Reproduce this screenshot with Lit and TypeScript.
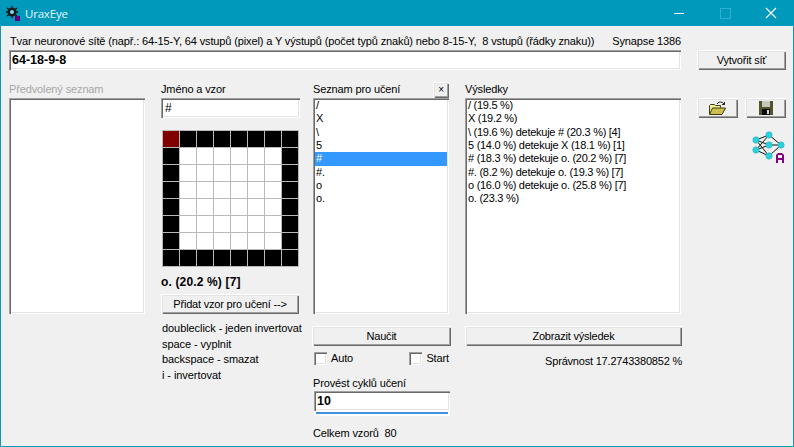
import { LitElement, html, css, svg } from "lit";
import { customElement } from "lit/decorators.js";

const learn = ["/", "X", "\\", "5", "#", "#.", "o", "o."];
const results = [
  "/ (19.5 %)",
  "X (19.2 %)",
  "\\ (19.6 %) detekuje # (20.3 %) [4]",
  "5 (14.0 %) detekuje X (18.1 %) [1]",
  "# (18.3 %) detekuje o. (20.2 %) [7]",
  "#. (8.2 %) detekuje o. (19.3 %) [7]",
  "o (16.0 %) detekuje o. (25.8 %) [7]",
  "o. (23.3 %)",
];
const cells: string[] = [];
for (let r = 0; r < 8; r++)
  for (let c = 0; c < 8; c++) {
    if (r === 0 && c === 0) cells.push("red");
    else if (r === 0 || c === 0 || r === 7 || c === 7) cells.push("on");
    else cells.push("");
  }

const nodes: [number, number][] = [
  [4, 9], [4, 19], [17, 4], [17, 14], [17, 25], [29, 14],
];

@customElement("app-root")
export class AppRoot extends LitElement {
  static styles = css`
    :host {
      display: block;
      width: 794px;
      height: 447px;
      font-family: "Liberation Sans", Arial, sans-serif;
      font-size: 11px;
      letter-spacing: -0.13px;
      color: #000;
      overflow: hidden;
    }
    .win {
      box-sizing: border-box;
      width: 794px;
      height: 447px;
      background: #f0f0f0;
      border: 1px solid #0b9ab8;
      border-top: 0;
      display: flex;
      flex-direction: column;
    }
    .title {
      flex: none;
      height: 26px;
      margin: 0 -1px;
      background: #0099bc;
      display: flex;
      align-items: center;
      color: #fff;
      padding-left: 5px;
    }
    .title svg.app { flex: none; }
    .title .name {
      font-family: "Open Sans", sans-serif;
      font-size: 11.5px;
      letter-spacing: -0.2px;
      margin-left: 4px;
      color: #e6f6fa;
      flex: 1;
    }
    .ctl { flex: none; width: 46px; height: 26px; display: block; }
    .content { flex: 1; padding: 7px 7px 0 8px; display: flex; flex-direction: column; }
    .top {
      display: flex;
      justify-content: space-between;
      width: 671px;
      height: 17px;
      line-height: 16px;
      padding-left: 1px;
      white-space: pre;
    }
    .toprow { display: flex; gap: 16px; }
    .sunken {
      box-sizing: border-box;
      background: #fff;
      box-shadow: inset 1px 1px #a0a0a0, inset 2px 2px #696969, inset -1px -1px #fff, inset -2px -2px #e3e3e3;
    }
    .raised {
      box-sizing: border-box;
      background: #f0f0f0;
      box-shadow: inset 1px 1px #fff, inset 2px 2px #e3e3e3, inset -1px -1px #696969, inset -2px -2px #a0a0a0;
      display: flex;
      align-items: center;
      justify-content: center;
      letter-spacing: -0.2px;
    }
    .edit {
      height: 20px;
      line-height: 20px;
      padding-left: 3px;
      font-weight: 700;
      font-size: 12.5px;
      letter-spacing: 0;
    }
    .net { width: 672px; }
    .make { width: 89px; height: 20px; }
    .main { display: flex; margin-top: 10px; }
    .col { display: flex; flex-direction: column; flex: none; }
    .c1 { width: 136px; margin-right: 16px; }
    .c2 { width: 139px; margin-right: 13px; }
    .c3 { width: 138px; margin-right: 14px; }
    .c4 { width: 217px; margin-right: 15px; }
    .c5 { width: 89px; }
    .lab { height: 18px; line-height: 18px; display: flex; justify-content: space-between; }
    .dis { color: #a6a6a6; }
    .list { height: 216px; padding: 1px 2px; overflow: hidden; }
    .list div { height: 13.33px; line-height: 13px; padding-left: 1px; white-space: pre; }
    .c4 .list { width: 216px; letter-spacing: -0.27px; }
    .list div.sel { background: #3399ff; color: #fff; }
    .closex {
      width: 16px;
      height: 16px;
      margin: 2px 2px 0 0;
      font-size: 10px;
      line-height: 14px;
    }
    .c3 .list { width: 136px; }
    .c2 .name { width: 139px; font-weight: 400; font-size: 12px; padding-left: 4px; }
    .grid {
      margin: 12px 0 0 1px;
      width: 137px;
      height: 137px;
      box-sizing: border-box;
      padding: 1px;
      background: #b9b9b9;
      display: grid;
      grid-template-columns: repeat(8, 16px);
      grid-auto-rows: 16px;
      gap: 1px;
    }
    .grid i { display: block; background: #fff; }
    .grid i.on { background: #000; }
    .grid i.red { background: #800000; }
    .score { font-weight: 700; font-size: 12px; letter-spacing: 0.15px; margin: 7px 0 0 0; height: 20px; line-height: 16px; }
    .add { height: 20px; width: 138px; letter-spacing: -0.2px; }
    .help { margin: 7px 0 0 1px; line-height: 15.7px; white-space: nowrap; letter-spacing: -0.07px; }
    .wide { height: 20px; margin-top: 12px; }
    .c3 .wide { margin-left: -1px; }
    .checks { display: flex; justify-content: space-between; margin: 5px 2px 0 1px; height: 15px; line-height: 15px; }
    .check { display: flex; align-items: center; gap: 4px; }
    .check b {
      display: block;
      width: 13px;
      height: 13px;
    }
    .cycl { margin: 8px 0 0 0; height: 17px; line-height: 18px; }
    .cycles { width: 136px; margin-left: 1px; }
    .prog {
      box-sizing: border-box;
      width: 136px;
      height: 5px;
      margin-left: 1px;
      background: #fff;
      padding: 1px 2px;
    }
    .prog span { display: block; height: 2px; background: #3f92e0; }
    .total { margin: 9px 0 0 0; line-height: 16px; white-space: pre; }
    .correct { text-align: right; margin-top: 7px; line-height: 16px; letter-spacing: -0.2px; }
    .tools { display: flex; justify-content: space-between; margin-top: 18px; }
    .tools .raised { width: 41px; height: 20px; }
    .neticon { display: block; margin: 13px 0 0 55px; }
  `;

  private folder() {
    return svg`<svg width="17" height="14" viewBox="0 0 17 14">
      <path d="M0.500 13V4.500l1-1h4l1 1h5v2" fill="#f3ef9a" stroke="#3d3a10"/>
      <path d="M0.500 13.500l3-6.500h13l-3.500 6.500z" fill="#cdbf4e" stroke="#3d3a10"/>
      <path d="M8 3c1-2 3-2.500 5.500-1.500l1 1" fill="none" stroke="#222"/>
      <path d="M12.500 4h3.500V0.500z" fill="#222"/>
    </svg>`;
  }
  private floppy() {
    return svg`<svg width="14" height="14" viewBox="0 0 14 14">
      <rect x="0" y="0" width="14" height="14" fill="#54542a"/>
      <rect x="3" y="0" width="8" height="6" fill="#c8c8c0"/>
      <rect x="3" y="8" width="8" height="6" fill="#0c0c0c"/>
      <rect x="8" y="9" width="2" height="4" fill="#d8d8d8"/>
    </svg>`;
  }
  private network() {
    const lines: [number, number, number, number][] = [];
    for (const a of [nodes[0], nodes[1]])
      for (const b of [nodes[2], nodes[3], nodes[4]]) lines.push([a[0], a[1], b[0], b[1]]);
    for (const b of [nodes[2], nodes[3], nodes[4]]) lines.push([b[0], b[1], nodes[5][0], nodes[5][1]]);
    return svg`<svg class="neticon" width="33" height="33" viewBox="0 0 33 33">
      ${lines.map((l) => svg`<line x1=${l[0]} y1=${l[1]} x2=${l[2]} y2=${l[3]} stroke="#111" stroke-width="1"/>`)}
      ${nodes.map((n) => svg`<circle cx=${n[0]} cy=${n[1]} r="3.200" fill="#2ad0dc" stroke="#38b0bc" stroke-width=".6"/>`)}
      <path d="M24 32V24l2-2h4l2 2v8h-2v-3h-4v3zM26 27h4v-3h-4z" fill="#800080" fill-rule="evenodd"/>
    </svg>`;
  }
  private appIcon() {
    return svg`<svg class="app" width="16" height="16" viewBox="0 0 16 16">
      <circle cx="7" cy="7" r="4.500" fill="#1c1c1c"/>
      <path d="M2 3l10 8M2 11l10-8M7 1v12M1 7h12" stroke="#1a1a1a" stroke-width="1.300"/>
      <circle cx="7" cy="7" r="2" fill="#7fd8e6"/>
      <rect x="10" y="11" width="5" height="5" fill="#600080"/>
    </svg>`;
  }

  render() {
    return html`<div class="win">
      <div class="title">
        ${this.appIcon()}
        <span class="name">UraxEye</span>
        <svg class="ctl" viewBox="0 0 46 26"><path d="M18 13.500h10" stroke="#fff"/></svg>
        <svg class="ctl" viewBox="0 0 46 26"><rect x="18.500" y="8.500" width="10" height="10" fill="none" stroke="#33add0"/></svg>
        <svg class="ctl" viewBox="0 0 46 26"><path d="M18 8l10 10M28 8L18 18" stroke="#fff" stroke-width="1.100"/></svg>
      </div>
      <div class="content">
        <div class="top"><span>Tvar neuronové sítě (např.: 64-15-Y, 64 vstupů (pixel) a Y výstupů (počet typů znaků) nebo 8-15-Y,  8 vstupů (řádky znaku))</span><span>Synapse 1386</span></div>
        <div class="toprow">
          <div class="sunken edit net">64-18-9-8</div>
          <div class="raised make">Vytvořit síť</div>
        </div>
        <div class="main">
          <div class="col c1">
            <div class="lab dis">Předvolený seznam</div>
            <div class="sunken list"></div>
          </div>
          <div class="col c2">
            <div class="lab">Jméno a vzor</div>
            <div class="sunken edit name">#</div>
            <div class="grid">${cells.map((c) => html`<i class=${c}></i>`)}</div>
            <div class="score">o. (20.2 %) [7]</div>
            <div class="raised add">Přidat vzor pro učení --&gt;</div>
            <div class="help">doubleclick - jeden invertovat<br />space - vyplnit<br />backspace - smazat<br />i - invertovat</div>
          </div>
          <div class="col c3">
            <div class="lab"><span>Seznam pro učení</span><span class="raised closex">×</span></div>
            <div class="sunken list">
              ${learn.map((t) => html`<div class=${t === "#" ? "sel" : ""}>${t}</div>`)}
            </div>
            <div class="raised wide">Naučit</div>
            <div class="checks">
              <label class="check"><b class="sunken"></b>Auto</label>
              <label class="check"><b class="sunken"></b>Start</label>
            </div>
            <div class="cycl">Provést cyklů učení</div>
            <div class="sunken edit cycles">10</div>
            <div class="prog"><span></span></div>
            <div class="total">Celkem vzorů  80</div>
          </div>
          <div class="col c4">
            <div class="lab">Výsledky</div>
            <div class="sunken list">${results.map((t) => html`<div>${t}</div>`)}</div>
            <div class="raised wide">Zobrazit výsledek</div>
            <div class="correct">Správnost 17.2743380852 %</div>
          </div>
          <div class="col c5">
            <div class="tools">
              <div class="raised">${this.folder()}</div>
              <div class="raised">${this.floppy()}</div>
            </div>
            ${this.network()}
          </div>
        </div>
      </div>
    </div>`;
  }
}
